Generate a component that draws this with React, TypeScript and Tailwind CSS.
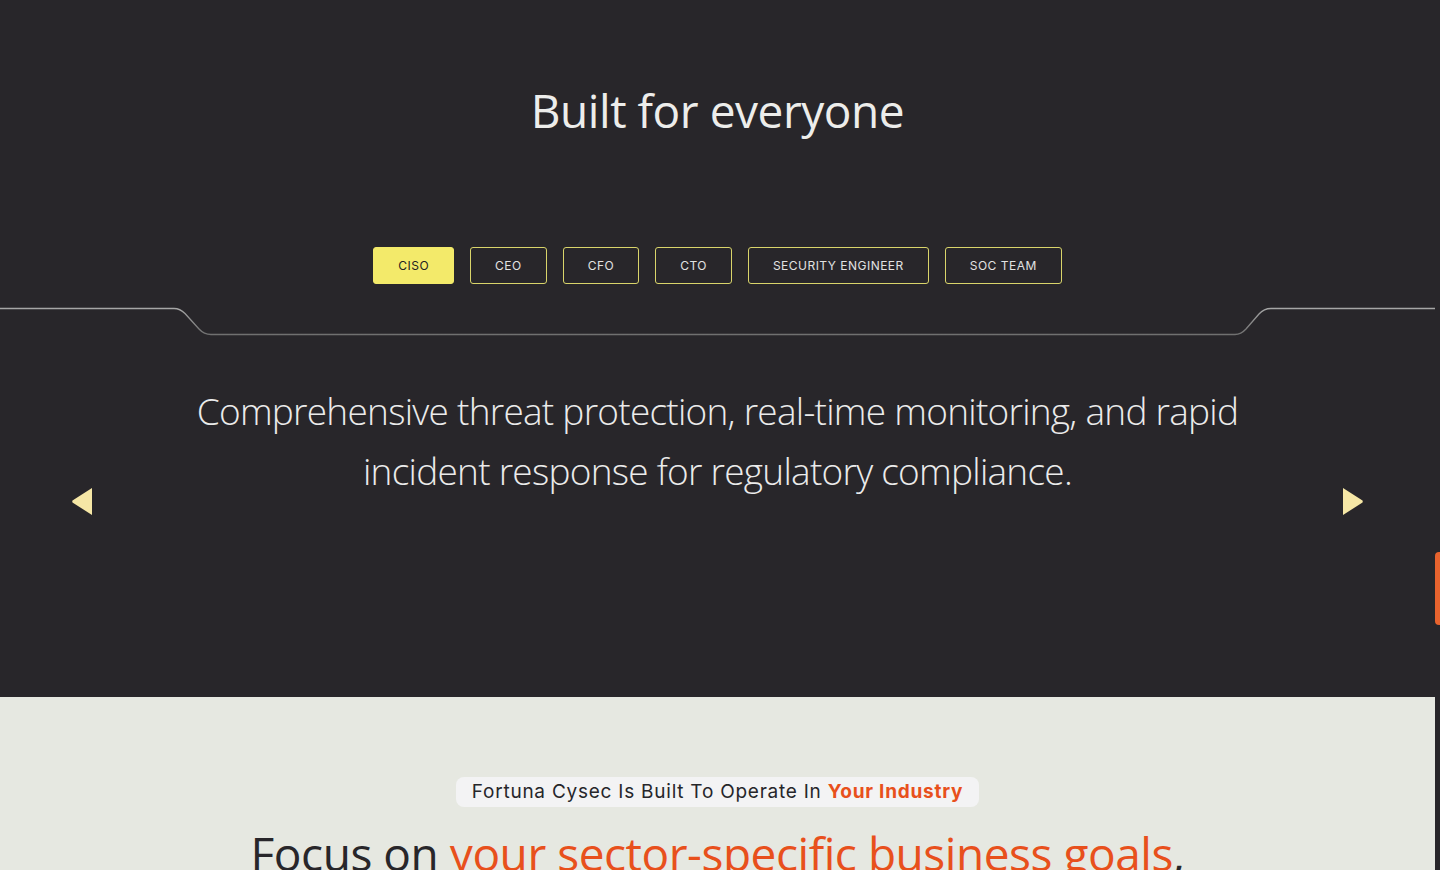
import React, { useState } from 'react';

const ROLES = ['CISO', 'CEO', 'CFO', 'CTO', 'SECURITY ENGINEER', 'SOC TEAM'];

const display = { fontFamily: '"Open Sans", "Noto Sans", sans-serif' };
const ui = { fontFamily: 'Inter, "Liberation Sans", sans-serif' };

const Divider: React.FC = () => (
  <svg width="1435" height="30" viewBox="0 0 1435 30" className="block">
    <defs>
      <linearGradient id="dv" x1="0" y1="0" x2="0" y2="30" gradientUnits="userSpaceOnUse">
        <stop offset="0" stopColor="#a9a9a9" />
        <stop offset="1" stopColor="#6b6b6b" />
      </linearGradient>
    </defs>
    <path
      d="M0 1.5 H174 Q180 1.5 185 6.5 L199 22 Q204 27.5 211 27.5 H1235 Q1241 27.5 1246 22 L1259 7 Q1264 1.5 1271 1.5 H1435"
      fill="none"
      stroke="url(#dv)"
      strokeWidth="1.3"
    />
  </svg>
);

const Arrow: React.FC<{ dir: 'left' | 'right' }> = ({ dir }) => (
  <button className="w-5 h-[27px] shrink-0 flex items-center justify-center">
    <svg width="20" height="27" viewBox="0 0 20 27">
      {dir === 'left' ? (
        <path d="M20 0 V27 L0.5 14.5 Q0 13.5 0.5 12.5 Z" fill="#f6e7a6" />
      ) : (
        <path d="M0 0 V27 L19.5 14.5 Q20 13.5 19.5 12.5 Z" fill="#f6e7a6" />
      )}
    </svg>
  </button>
);

export default function App() {
  const [active, setActive] = useState('CISO');

  return (
    <div className="w-full h-screen overflow-hidden flex bg-[#28262a]">
      <main className="flex-1 min-w-0">
        <section className="bg-[#28262a] h-[697px] pt-[80px] flex flex-col items-center">
          <h2
            className="text-[46px] leading-[60px] text-[#ededeb] font-normal tracking-[-0.01em]"
            style={display}
          >
            Built for everyone
          </h2>

          <div className="mt-[107px] flex gap-4" style={ui}>
            {ROLES.map(r => (
              <button
                key={r}
                onClick={() => setActive(r)}
                className={`h-[37px] px-6 rounded-[3px] border text-[12px] tracking-[0.04em] ${
                  active === r
                    ? 'bg-[#f3ea6a] border-[#f3ea6a] text-[#222]'
                    : 'border-[#d9d46a] text-[#e2e2e2]'
                }`}
              >
                {r}
              </button>
            ))}
          </div>

          <div className="mt-[23px] w-full">
            <Divider />
          </div>

          <div className="w-full px-[72px] mt-[44px] flex items-center h-[240px]">
            <Arrow dir="left" />
            <div className="flex-1 self-stretch">
              <p
                className="text-center text-[37px] leading-[60px] font-light text-[#ebebeb] tracking-[-0.02em]"
                style={display}
              >
                Comprehensive threat protection, real-time monitoring, and rapid
                <br />
                incident response for regulatory compliance.
              </p>
            </div>
            <Arrow dir="right" />
          </div>
        </section>

        <section className="bg-[#e6e8e1] pt-[80px] flex flex-col items-center">
          <div
            className="h-[30px] px-4 rounded-lg bg-[#f3f3f4] flex items-center text-[19px] text-[#26262a] tracking-[0.04em]"
            style={ui}
          >
            Fortuna Cysec Is Built To Operate In&nbsp;
            <span className="font-bold text-[#e8501c]">Your Industry</span>
          </div>
          <h2
            className="mt-[16px] text-[46px] leading-[60px] text-[#28262a] tracking-[-0.01em]"
            style={display}
          >
            Focus on <span className="text-[#e8501c]">your sector-specific business goals</span>,
          </h2>
        </section>
      </main>

      <div className="w-[5px] shrink-0 bg-[#28262a] relative">
        <div className="absolute left-0 right-0 top-[552px] h-[73px] rounded-l-sm bg-[#e8632e]" />
      </div>
    </div>
  );
}
